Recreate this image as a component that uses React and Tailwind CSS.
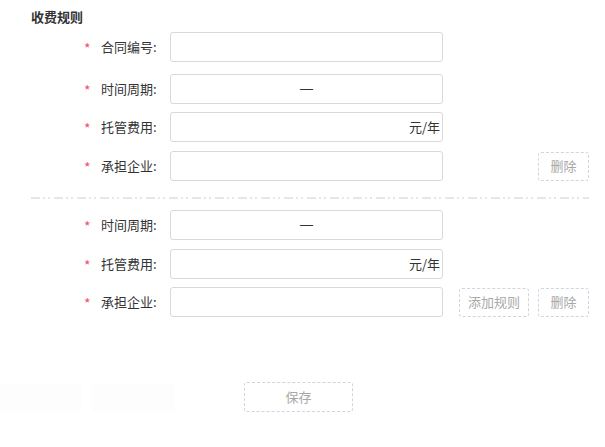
import React from "react";

const Label = ({ text }) => (
  <div className="w-[170px] shrink-0 flex items-center pl-[84px]">
    <span className="w-[17px] text-[14px] text-[#f0506e] leading-none pt-[2px]">*</span>
    <span className="text-[13px] text-[#333]">{text}:</span>
  </div>
);

const GhostButton = ({ children, className = "" }) => (
  <button className={`h-[29px] rounded-[3px] border border-dashed border-[#cfd6e0] text-[13px] text-[#a8a8a8] bg-white ${className}`}>
    {children}
  </button>
);

const Row = ({ label, mt, children, add, del }) => (
  <div className={`flex items-center h-[30px] ${mt}`}>
    <Label text={label} />
    <div className="w-[273px] h-[30px] border border-[#d9d9d9] rounded-[3px] flex items-center text-[13px] text-[#333]">
      {children}
    </div>
    <div className="w-[70px] ml-[16px]">
      {add && <GhostButton className="w-[70px]">添加规则</GhostButton>}
    </div>
    {del && <GhostButton className="w-[51px] ml-[9px]">删除</GhostButton>}
  </div>
);

const Period = () => (
  <span className="w-full text-center text-[13px]" style={{ fontFamily: '"Liberation Sans", sans-serif' }}>—</span>
);
const Fee = () => <span className="w-full text-right pr-[2px]">元/年</span>;

export default function App() {
  return (
    <div
      className="w-[605px] h-[447px] bg-white pt-[8px]"
      style={{ fontFamily: '"Noto Sans CJK SC", "Noto Sans", sans-serif' }}
    >
      <div className="pl-[31px] text-[13px] font-bold text-[#333] leading-[18px]">收费规则</div>

      <Row label="合同编号" mt="mt-[6px]" />
      <Row label="时间周期" mt="mt-[12px]"><Period /></Row>
      <Row label="托管费用" mt="mt-[8px]"><Fee /></Row>
      <Row label="承担企业" mt="mt-[9px]" del />

      <div className="mt-[16px] pl-[31px] h-[2px]">
        <svg width="558" height="2">
          <line x1="0" y1="1" x2="558" y2="1" stroke="#dedede" strokeWidth="1.5" strokeDasharray="9 3 2 3 2 4" />
        </svg>
      </div>

      <Row label="时间周期" mt="mt-[11px]"><Period /></Row>
      <Row label="托管费用" mt="mt-[9px]"><Fee /></Row>
      <Row label="承担企业" mt="mt-[8px]" add del />

      <div className="mt-[65px] flex items-center">
        <div className="w-[82px] h-[27px] bg-[#fdfdfd]" />
        <div className="w-[83px] h-[27px] bg-[#fdfdfd] ml-[10px]" />
        <GhostButton className="w-[109px] h-[30px] ml-[69px]">保存</GhostButton>
      </div>
    </div>
  );
}
